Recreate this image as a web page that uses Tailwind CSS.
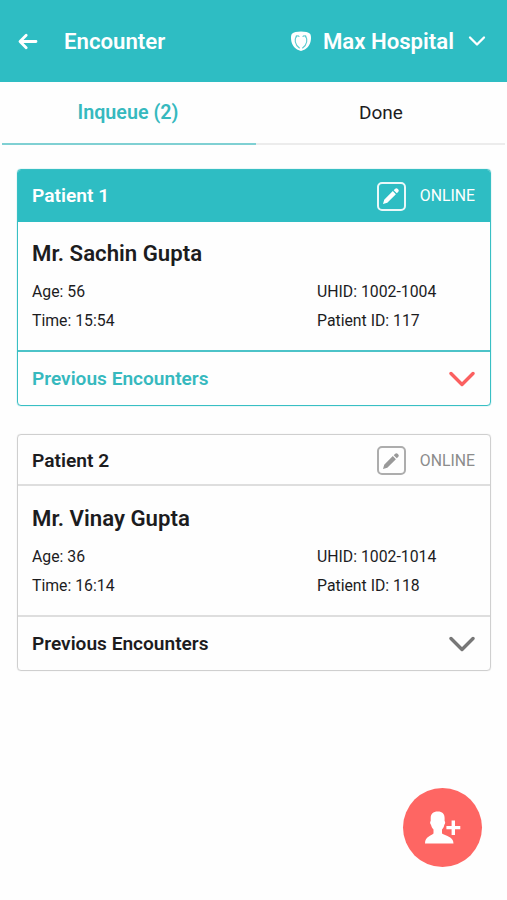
<!DOCTYPE html>
<html lang="en">
<head>
<meta charset="utf-8">
<title>Encounter</title>
<script src="https://cdn.jsdelivr.net/npm/@tailwindcss/browser@4"></script>
</head>
<body class="bg-white">
<div class="relative h-[900px] w-[507px] overflow-hidden bg-[#fefefe] font-['Roboto','Liberation_Sans',sans-serif] text-[#1c1c1e]">
  <header class="flex h-[82px] items-center bg-[#2ebdc3] pl-[18px] pr-[21px] text-white">
    <svg class="h-5 w-5 shrink-0" viewBox="0 0 20 20" fill="none" stroke="currentColor" stroke-width="2.8" stroke-linecap="round" stroke-linejoin="round"><path d="M18 10.500H2.500M8.200 4.200 2 10.500l6.200 6.300"/></svg>
    <h1 class="ml-[26px] pt-[2px] text-[22.200px] font-semibold whitespace-nowrap">Encounter</h1>
    <button class="ml-auto flex items-center">
      <svg class="h-5 w-5" viewBox="0 0 20 20"><path fill="currentColor" d="M10 .6C6 .6 2.500 1.400 1 2.700 0 3.700-.1 6.200.1 8.500c.4 5.400 4.300 10.500 9.900 11.400 5.600-.9 9.500-6 9.900-11.400.2-2.300.1-4.800-.9-5.800C17.500 1.400 14 .6 10 .6Z"/><path d="M5.400 4.800C3 9.500 4.500 14 8.400 17M14.600 4.800c2.400 4.700.9 9.200-3 12.200M5.400 6C6 4.500 7.500 4.500 8 5.500M14.600 6C14 4.500 12.500 4.500 12 5.500" fill="none" stroke="#5ccbd0" stroke-width="1.100" stroke-linecap="round"/></svg>
      <span class="ml-3 pt-[2px] text-[22.200px] font-semibold whitespace-nowrap">Max Hospital</span>
      <svg class="ml-[14px] h-[18px] w-[18px]" viewBox="0 0 18 18" fill="none" stroke="currentColor" stroke-width="2.300" stroke-linecap="round" stroke-linejoin="round"><path d="m2 5.500 7 7 7-7"/></svg>
    </button>
  </header>
  <nav class="flex h-[63px] px-[2px] text-[19px]">
    <div class="flex w-[254px] items-center justify-center border-b-2 border-[#7fd0d3] pt-[1px] pr-[2px] text-[19.700px] font-semibold text-[#36b9be]">Inqueue (2)</div>
    <div class="flex flex-1 items-center justify-center border-b-2 border-[#ececec] pt-[1px] pl-[1px]">Done</div>
  </nav>
  <main class="flex flex-col gap-[28px] pr-4 pl-[17px] pt-6">
    <section class="flex h-[237px] flex-col overflow-hidden rounded-[4px] border-[1.500px] border-[#38bfc4] shadow-[0_0_1px_#38bfc4]">
      <div class="flex h-[52px] shrink-0 items-center bg-[#2ebdc3] pl-[14px] pr-[15px] text-white">
        <h2 class="pt-[1px] text-[19.200px] font-semibold">Patient 1</h2>
        <span class="ml-auto flex h-[29px] w-[29px] items-center justify-center rounded-[5px] border-2 border-white/90">
          <svg class="h-[18px] w-[18px]" viewBox="0 0 18 18" fill="currentColor"><path d="m1 17 1.200-4.300L10.800 4.100l3.100 3.100L5.300 15.800ZM11.700 3.200l1.500-1.500q1.200-1.100 2.400 0l.7.7q1.100 1.200 0 2.400l-1.500 1.500Z"/></svg>
        </span>
        <span class="ml-[14px] text-[15.800px]">ONLINE</span>
      </div>
      <div class="flex h-[130px] shrink-0 flex-col border-b-2 border-[#4cc3c8] pl-[14px] pt-[15px]">
        <h3 class="text-[22.200px] leading-8 font-semibold">Mr. Sachin Gupta</h3>
        <div class="mt-[9px] grid grid-cols-[285px_1fr] text-[15.800px] leading-[28.500px]">
          <span>Age: 56</span><span>UHID: 1002-1004</span>
          <span>Time: 15:54</span><span>Patient ID: 117</span>
        </div>
      </div>
      <div class="flex flex-1 items-center pl-[14px] pr-[15px]">
        <span class="pt-[2px] text-[19.100px] font-semibold text-[#36b9be]">Previous Encounters</span>
        <svg class="ml-auto h-4 w-[26px]" viewBox="0 0 26 16" fill="none" stroke="#fb6060" stroke-width="3.400" stroke-linecap="round" stroke-linejoin="round"><path d="m2 2.500 11 11 11-11"/></svg>
      </div>
    </section>
    <section class="flex h-[237px] flex-col overflow-hidden rounded-[4px] border-[1.500px] border-[#cfcfcf] shadow-[0_0_1px_#cfcfcf]">
      <div class="flex h-[51px] shrink-0 items-center border-b-2 border-[#dedede] pl-[14px] pr-[15px] pt-[2px]">
        <h2 class="pt-[1px] text-[19.200px] font-semibold">Patient 2</h2>
        <span class="ml-auto flex h-[29px] w-[29px] items-center justify-center rounded-[5px] border-2 border-[#adadad] text-[#999]">
          <svg class="h-[18px] w-[18px]" viewBox="0 0 18 18" fill="currentColor"><path d="m1 17 1.200-4.300L10.800 4.100l3.100 3.100L5.300 15.800ZM11.700 3.200l1.500-1.500q1.200-1.100 2.400 0l.7.7q1.100 1.200 0 2.400l-1.500 1.500Z"/></svg>
        </span>
        <span class="ml-[14px] text-[15.800px] text-[#8c8c8c]">ONLINE</span>
      </div>
      <div class="flex h-[131px] shrink-0 flex-col border-b-2 border-[#dedede] pl-[14px] pt-[16px]">
        <h3 class="text-[22.200px] leading-8 font-semibold">Mr. Vinay Gupta</h3>
        <div class="mt-[9px] grid grid-cols-[285px_1fr] text-[15.800px] leading-[28.500px]">
          <span>Age: 36</span><span>UHID: 1002-1014</span>
          <span>Time: 16:14</span><span>Patient ID: 118</span>
        </div>
      </div>
      <div class="flex flex-1 items-center pl-[14px] pr-[15px]">
        <span class="pt-[2px] text-[19.100px] font-semibold">Previous Encounters</span>
        <svg class="ml-auto h-4 w-[26px]" viewBox="0 0 26 16" fill="none" stroke="#777" stroke-width="3.400" stroke-linecap="round" stroke-linejoin="round"><path d="m2 2.500 11 11 11-11"/></svg>
      </div>
    </section>
  </main>
  <button aria-label="Add patient" class="absolute top-[788px] left-[403px] h-[79px] w-[79px] rounded-full bg-[#fe6663]">
    <svg class="h-full w-full" viewBox="0 0 79 79" fill="#fff"><path d="M34.800 23.500C30 23.500 27.700 26 27.700 30V33C26.800 33.500 27 36 28 36.800C28.500 39 29.300 40.500 30.500 41.500V45.500C28.500 48 22 48 22 55.600H50.500C50.500 48 42 48 39 45.500V41.500C40.200 40.500 41 39 41.300 36.800C42.300 36 42.500 33.500 41.600 33V30C41.600 26 39.500 23.500 34.800 23.500Z"/><path d="M48.600 32.500H52V37.900H57.300V41.300H52V46.900H48.600V41.300H43.400V37.900H48.600Z"/></svg>
  </button>
</div>
</body>
</html>
